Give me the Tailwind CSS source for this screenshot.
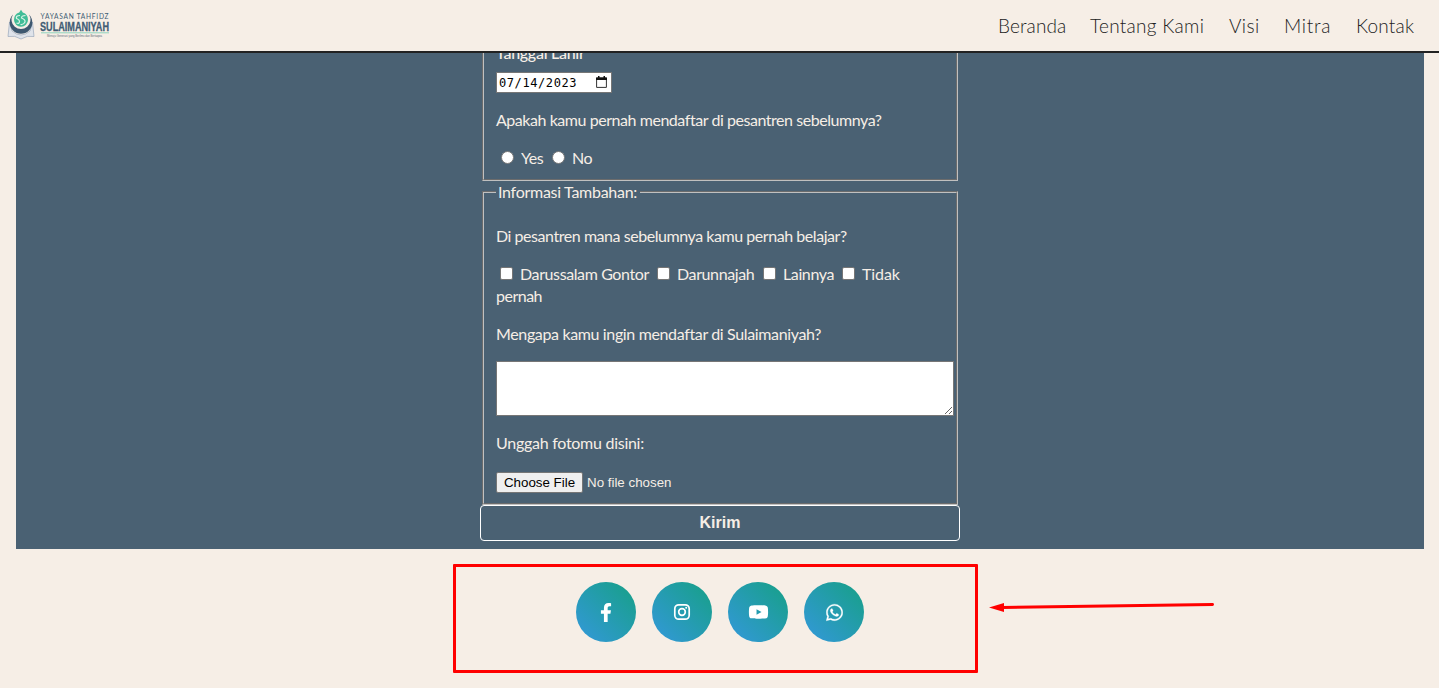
<!DOCTYPE html>
<html lang="id">
<head>
<meta charset="utf-8">
<title>Yayasan Tahfidz Sulaimaniyah</title>
<script src="https://cdn.jsdelivr.net/npm/@tailwindcss/browser@4"></script>
</head>
<body class="relative h-[688px] overflow-hidden bg-[#f6eee6] font-['Lato','Noto_Sans',sans-serif]">
<header class="flex h-[53px] justify-between border-b-2 border-[#222222] bg-[#f6eee6]">
  <svg class="ml-2 mt-2 h-9 w-[104px] overflow-visible" viewBox="0 0 104 36">
    <path d="M1.500 14 L0 28.500 Q7 27 13 31 Q19 27 26 28.500 L24.500 14 L22 23 Q13 31 4 23Z" fill="#dfe3ea" stroke="#9aa8bb" stroke-width=".7"/>
    <path d="M5 6.500 A11.300 11.300 0 1 0 21 6.500 A9.500 9.500 0 1 1 5 6.500Z" fill="#3e5870"/>
    <path d="M13 1.800 L14.800 4.600 Q20 6.300 20 11.800 A7 7 0 0 1 6 11.800 Q6 6.300 11.200 4.600Z" fill="#41bd97"/>
    <path d="M12 7.500 Q7.500 7.500 8.500 10.500 Q11.500 11.500 11.500 13.500 Q11.500 16 8.500 15 M17.500 7.500 Q13.500 7.500 13.500 10 Q17.500 11.500 17 14 Q15.500 17 12.500 16.500" fill="none" stroke="#d8f3e7" stroke-width="1.200"/>
    <text x="32.500" y="10.800" textLength="68" lengthAdjust="spacing" font-family="Lato" font-size="6.600" fill="#405b73">YAYASAN TAHFIDZ</text>
    <text x="32" y="23" textLength="69" lengthAdjust="spacingAndGlyphs" font-family="Liberation Sans Narrow, Liberation Sans" font-weight="700" font-size="12.500" fill="#405b73" stroke="#405b73" stroke-width=".3">SULAIMANIYAH</text>
    <path d="M33 24.800H101" stroke="#75cdb2" stroke-width=".8"/>
    <text x="39" y="28.500" textLength="55" lengthAdjust="spacingAndGlyphs" font-family="Liberation Sans" font-size="3.600" fill="#5f6c78">Menuju Generasi yang Berilmu dan Bertaqwa</text>
  </svg>
  <nav class="mr-[25px] flex h-[51px] items-center whitespace-nowrap pt-[2px] text-[19px] font-light text-[#222222]">
    <a class="w-[92px] tracking-[0.1px]">Beranda</a><a class="w-[139px] tracking-[0.3px]">Tentang Kami</a><a class="w-[55px] tracking-[0.4px]">Visi</a><a class="w-[72px] tracking-[0.7px]">Mitra</a><a class="w-[58px] tracking-[0.2px]">Kontak</a>
  </nav>
</header>

<main class="mx-4 mr-[15px] flex h-[496px] justify-center overflow-hidden bg-[#4a6173] text-[16px] leading-[22px] text-[#f6eee6]">
  <form class="w-[480px]">
    <fieldset class="mx-[2px] -mt-[30px] h-[158px] border-2 border-[#c0c0c0] pl-3 pt-[18px] [border-style:groove]">
      <div class="h-[29px] pb-[2px] leading-[20px] font-medium tracking-[-0.27px]"><span>Tanggal Lahir</span></div>
      <div class="flex h-[21px] w-[116px] items-center justify-between border border-[#767676] bg-white pl-[2px] pr-1 text-black">
        <span class="pt-px font-['DejaVu_Sans_Mono',monospace] text-[12px] tracking-[0.58px]">07/14/2023</span>
        <svg class="h-[13px] w-[11px]" viewBox="0 0 11 13"><path d="M.6 2H10.400V11.400H.6Z" fill="none" stroke="#333" stroke-width="1"/><path d="M0 1.500H11V4H0ZM2 0H3.500V2H2ZM7.500 0H9V2H7.500Z" fill="#111"/></svg>
      </div>
      <p class="mt-[17px] pb-[2px] leading-[20px] tracking-[-0.45px]"><span>Apakah kamu pernah mendaftar di pesantren sebelumnya?</span></p>
      <div class="mt-4 flex pb-[2px] leading-[20px]">
        <i class="ml-[5px] mt-[3px] size-[13px] rounded-full border border-[#767676] bg-white"></i><span class="ml-[7px] w-[31px] tracking-[-0.5px]">Yes</span>
        <i class="mt-[3px] size-[13px] rounded-full border border-[#767676] bg-white"></i><span class="ml-[7px] tracking-[-0.4px]">No</span>
      </div>
    </fieldset>
    <fieldset class="mx-[2px] h-[324px] border-2 border-[#c0c0c0] pl-3 [border-style:groove]">
      <legend class="h-[22px] w-[144px] whitespace-nowrap px-[2px] tracking-[-0.28px]"><span>Informasi Tambahan:</span></legend>
      <p class="mt-[23px] pb-[2px] leading-[20px] tracking-[-0.45px]"><span>Di pesantren mana sebelumnya kamu pernah belajar?</span></p>
      <div class="mt-4 flex whitespace-nowrap pb-[2px] leading-[20px] tracking-[-0.39px]">
        <i class="ml-1 mt-[3px] size-[13px] shrink-0 rounded-[2px] border border-[#767676] bg-white"></i><span class="ml-[7px] w-[137px]">Darussalam Gontor</span>
        <i class="mt-[3px] size-[13px] shrink-0 rounded-[2px] border border-[#767676] bg-white"></i><span class="ml-[7px] w-[86px]">Darunnajah</span>
        <i class="mt-[3px] size-[13px] shrink-0 rounded-[2px] border border-[#767676] bg-white"></i><span class="ml-[7px] w-[59px]">Lainnya</span>
        <i class="mt-[3px] size-[13px] shrink-0 rounded-[2px] border border-[#767676] bg-white"></i><span class="ml-[7px] tracking-[-0.1px]">Tidak</span>
      </div>
      <div class="pb-[2px] leading-[20px] tracking-[-0.5px]"><span>pernah</span></div>
      <p class="mt-4 pb-[2px] leading-[20px] tracking-[-0.36px]"><span>Mengapa kamu ingin mendaftar di Sulaimaniyah?</span></p>
      <textarea class="mt-[15px] block h-[55px] w-[458px] border border-[#767676] bg-white"></textarea>
      <p class="mt-[17px] pb-[2px] leading-[20px] tracking-[-0.27px]"><span>Unggah fotomu disini:</span></p>
      <div class="mt-[16px] flex items-center font-['Liberation_Sans',sans-serif] text-[13.333px]">
        <span class="flex h-[21px] w-[87px] items-center justify-center rounded-[2px] border border-[#767676] bg-[#efefef] pt-px text-black">Choose File</span><span class="ml-1 pt-px">No file chosen</span>
      </div>
    </fieldset>
    <button type="button" class="block h-9 w-[480px] rounded border border-white font-['Liberation_Sans',sans-serif] text-[16px] font-bold">Kirim</button>
  </form>
</main>

<footer class="ml-[453px] mt-[15px] flex h-[109px] w-[525px] justify-center gap-4 rounded-[1px] border-3 border-[#ff0000] pl-[9px] pt-[15px] text-white">
  <a class="flex size-[60px] items-center justify-center rounded-full bg-[linear-gradient(45deg,#3498db,#16a085)]"><svg class="h-[19px] w-[12px]" viewBox="0 0 320 512"><path fill="currentColor" d="M279.140 288l14.220-92.660h-88.910v-60.130c0-25.350 12.420-50.060 52.240-50.060h40.420V6.260S260.430 0 225.360 0c-73.220 0-121.080 44.380-121.080 124.720v70.620H22.890V288h81.390v224h100.170V288z"/></svg></a>
  <a class="flex size-[60px] items-center justify-center rounded-full bg-[linear-gradient(45deg,#3498db,#16a085)]"><svg class="size-[18px]" viewBox="0 0 18 18"><rect x="1.800" y="1.800" width="14.400" height="14.400" rx="4" fill="none" stroke="currentColor" stroke-width="1.700"/><circle cx="9" cy="9" r="3.300" fill="none" stroke="currentColor" stroke-width="1.700"/><circle cx="13.200" cy="4.800" r="1" fill="currentColor"/></svg></a>
  <a class="flex size-[60px] items-center justify-center rounded-full bg-[linear-gradient(45deg,#3498db,#16a085)]"><svg class="h-[18px] w-[21px]" viewBox="0 0 576 512"><path fill="currentColor" d="M549.655 124.083c-6.281-23.650-24.787-42.276-48.284-48.597C458.781 64 288 64 288 64S117.220 64 74.629 75.486c-23.497 6.322-42.003 24.947-48.284 48.597-11.412 42.867-11.412 132.305-11.412 132.305s0 89.438 11.412 132.305c6.281 23.650 24.787 41.500 48.284 47.821C117.220 448 288 448 288 448s170.780 0 213.371-11.486c23.497-6.321 42.003-24.171 48.284-47.821 11.412-42.867 11.412-132.305 11.412-132.305s0-89.438-11.412-132.305zm-317.510 213.508V175.185l142.739 81.205-142.739 81.201z"/></svg></a>
  <a class="flex size-[60px] items-center justify-center rounded-full bg-[linear-gradient(45deg,#3498db,#16a085)]"><svg class="h-[19px] w-[17px]" viewBox="0 0 448 512"><path fill="currentColor" stroke="currentColor" stroke-width="8" d="M380.900 97.100C339 55.100 283.200 32 223.900 32c-122.400 0-222 99.600-222 222 0 39.100 10.200 77.300 29.600 111L0 480l117.700-30.900c32.400 17.700 68.900 27 106.100 27h.1c122.300 0 224.100-99.600 224.100-222 0-59.300-25.200-115-67.100-157zm-157 341.600c-33.200 0-65.700-8.900-94-25.700l-6.700-4-69.800 18.300L72 359.200l-4.400-7c-18.500-29.400-28.200-63.300-28.200-98.200 0-101.700 82.800-184.500 184.600-184.500 49.300 0 95.600 19.200 130.400 54.100 34.800 34.900 56.200 81.200 56.100 130.500 0 101.800-84.900 184.600-186.600 184.600zm101.200-138.200c-5.500-2.800-32.800-16.200-37.900-18-5.100-1.900-8.800-2.800-12.500 2.800-3.700 5.600-14.300 18-17.600 21.800-3.200 3.700-6.500 4.200-12 1.400-32.600-16.300-54-29.100-75.500-66-5.700-9.800 5.700-9.100 16.300-30.300 1.800-3.700.9-6.900-.5-9.700-1.400-2.800-12.500-30.100-17.100-41.200-4.500-10.800-9.100-9.300-12.500-9.500-3.200-.2-6.900-.2-10.600-.2-3.700 0-9.700 1.400-14.800 6.900-5.100 5.600-19.400 19-19.400 46.300 0 27.300 19.900 53.700 22.600 57.400 2.800 3.700 39.100 59.700 94.800 83.800 35.200 15.200 49 16.500 66.600 13.900 10.700-1.600 32.800-13.400 37.400-26.400 4.600-13 4.600-24.100 3.200-26.400-1.300-2.500-5-3.900-10.500-6.600z"/></svg></a>
</footer>

<svg class="pointer-events-none absolute left-[988px] top-[600px] h-4 w-[228px]" viewBox="0 0 228 16"><path d="M14 7.500L224.500 4.500" stroke="#ff0000" stroke-width="3" stroke-linecap="round"/><path d="M1 7.500L16 3V12Z" fill="#ff0000"/></svg>
</body>
</html>
